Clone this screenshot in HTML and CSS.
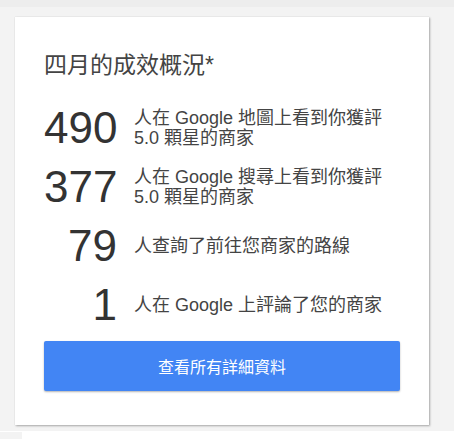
FILE: index.html
```html
<!DOCTYPE html>
<html lang="zh-Hant">
<head>
  <meta charset="UTF-8">
  <meta name="viewport" content="width=device-width, initial-scale=1.0">
  <title>成效概況</title>
  <link rel="stylesheet" href="styles.css">
</head>
<body>
  <div class="page">
    <div class="card">
      <h2 class="card-title">四月的成效概況*</h2>

      <div class="stats">
        <div class="stat">
          <span class="stat-num">490</span>
          <span class="stat-text">人在 Google 地圖上看到你獲評<br>5.0 顆星的商家</span>
        </div>
        <div class="stat">
          <span class="stat-num">377</span>
          <span class="stat-text">人在 Google 搜尋上看到你獲評<br>5.0 顆星的商家</span>
        </div>
        <div class="stat">
          <span class="stat-num">79</span>
          <span class="stat-text">人查詢了前往您商家的路線</span>
        </div>
        <div class="stat">
          <span class="stat-num">1</span>
          <span class="stat-text">人在 Google 上評論了您的商家</span>
        </div>
      </div>

      <button class="details-btn">查看所有詳細資料</button>
    </div>
  </div>
  <div class="footer-tab"></div>
</body>
</html>
```

FILE: styles.css
```css
body {
  margin: 0;
  padding: 0;
  background-color: #fff;
  font-family: "Liberation Sans", Arial, "Noto Sans CJK TC", sans-serif;
}

.page {
  background-color: #f3f3f3;
  border-top: 7px solid #ededed;
  height: 431px;
  box-sizing: border-box;
  padding: 10px 25px 0 15px;
}

.card {
  background-color: #fff;
  height: 408px;
  box-sizing: border-box;
  padding: 34px 29px 0 29px;
  box-shadow: 1px 1px 2px rgba(0, 0, 0, 0.3), 0 0 1px rgba(0, 0, 0, 0.15);
}

.card-title {
  margin: 0 0 19px 0;
  font-size: 23px;
  line-height: 28px;
  font-weight: normal;
  color: #444;
}

.stat {
  display: flex;
  align-items: center;
  height: 59px;
}

.stat-num {
  width: 73px;
  flex-shrink: 0;
  text-align: right;
  font-size: 44px;
  color: #333;
  line-height: 50px;
}

.stat-text {
  margin-left: 17px;
  font-size: 18px;
  line-height: 20px;
  color: #444;
}

.details-btn {
  display: block;
  width: 100%;
  height: 50px;
  margin-top: 7px;
  border: none;
  border-radius: 2px;
  background-color: #4285f4;
  color: #fff;
  font-family: inherit;
  font-size: 16px;
  box-shadow: 0 1px 2px rgba(0, 0, 0, 0.3);
  cursor: pointer;
}

.footer-tab {
  width: 22px;
  height: 7px;
  margin-top: 1px;
  background-color: #f3f3f3;
}
```
